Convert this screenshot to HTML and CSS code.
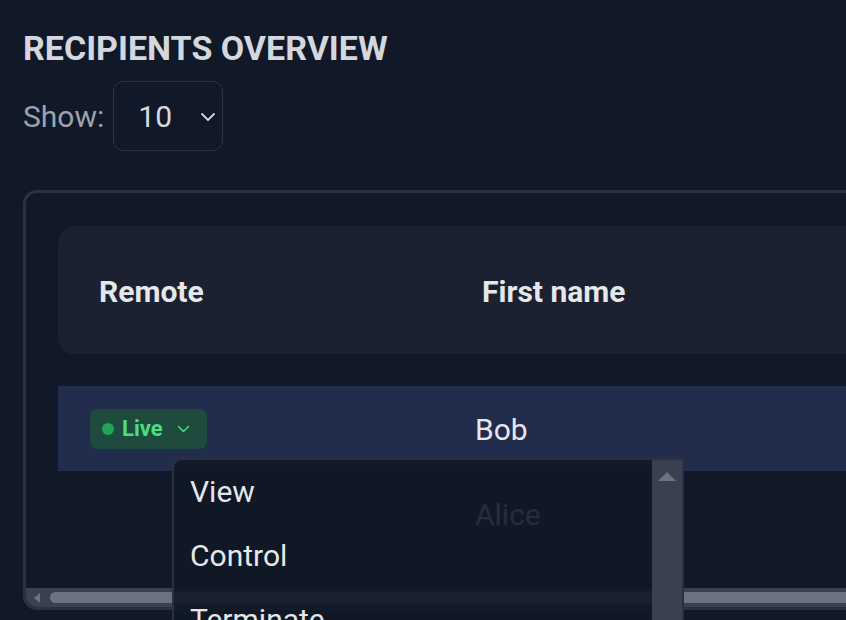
FILE: index.html
```html
<!DOCTYPE html>
<html lang="en">
<head>
<meta charset="utf-8">
<title>Recipients overview</title>
<link rel="stylesheet" href="styles.css">
</head>
<body>
<main class="page">
  <h1 class="title">RECIPIENTS OVERVIEW</h1>
  <div class="show-row">
    <span class="show-label">Show:</span>
    <div class="select">
      <span class="select-value">10</span>
      <svg class="select-chevron" width="16" height="10" viewBox="0 0 16 10"><path d="M2 2 L8 8 L14 2" fill="none" stroke="currentColor" stroke-width="1.8" stroke-linecap="round" stroke-linejoin="round"/></svg>
    </div>
  </div>

  <div class="table-card">
    <div class="table-scroll">
      <div class="thead">
        <div class="th th-first">Remote</div>
        <div class="th">First name</div>
        <div class="th"></div>
      </div>
      <div class="row row-selected">
        <div class="td">
          <span class="badge">
            <span class="badge-dot"></span>
            <span class="badge-text">Live</span>
            <svg class="badge-chevron" width="13" height="8" viewBox="0 0 13 8"><path d="M1.5 1.5 L6.5 6.5 L11.5 1.5" fill="none" stroke="currentColor" stroke-width="1.5" stroke-linecap="round" stroke-linejoin="round"/></svg>
          </span>
        </div>
        <div class="td">Bob</div>
        <div class="td"></div>
      </div>
      <div class="row">
        <div class="td"></div>
        <div class="td">Alice</div>
        <div class="td"></div>
      </div>
    </div>
    <div class="hscroll">
      <span class="hscroll-arrow"></span>
      <span class="hscroll-thumb"></span>
    </div>
  </div>

  <div class="menu">
    <ul class="menu-list">
      <li class="menu-item">View</li>
      <li class="menu-item">Control</li>
      <li class="menu-item">Terminate</li>
    </ul>
    <div class="menu-scrollbar"><span class="menu-scroll-up"></span></div>
  </div>
</main>
</body>
</html>
```

FILE: styles.css
```css
html, body {
  margin: 0;
  padding: 0;
  overflow: hidden;
  background: #111827;
}

body {
  font-family: Roboto, "Liberation Sans", sans-serif;
  color: #e5e7eb;
}

.page {
  position: relative;
  padding: 28px 0 0 23px;
  width: 1300px;
  height: 620px;
  box-sizing: border-box;
}

.title {
  margin: 0;
  font-size: 34px;
  line-height: 40px;
  font-weight: 700;
  color: #d4d7dd;
}

.show-row {
  margin-top: 13px;
  display: flex;
  align-items: baseline;
  gap: 8px;
}

.show-label {
  font-size: 30px;
  line-height: 36px;
  color: #9ca3af;
}

.select {
  display: flex;
  align-items: center;
  width: 110px;
  height: 70px;
  box-sizing: border-box;
  border: 1.5px solid #2b3141;
  border-radius: 10px;
  padding: 16px 6px 15px 24px;
  margin-left: 1px;
}

.select-value {
  font-size: 30px;
  line-height: 36px;
  color: #d8dbe0;
}

.select-chevron {
  margin-left: auto;
  color: #d1d5db;
}

.table-card {
  margin-top: 39px;
  width: 1200px;
  border: 3px solid #2b3141;
  border-radius: 14px;
  overflow: hidden;
  background: #111827;
}

.table-scroll {
  padding: 33px 0 32px 32px;
  display: flex;
  flex-direction: column;
}

.thead {
  display: grid;
  grid-template-columns: 385px 385px 385px;
  height: 128px;
  align-items: center;
  background: #1b2130;
  border-radius: 16px;
  margin-bottom: 32px;
}

.th {
  padding: 3px 0 0 39px;
  font-size: 30px;
  line-height: 36px;
  font-weight: 700;
  color: #e5e7eb;
}

.th-first {
  padding-left: 41px;
}

.row {
  display: grid;
  grid-template-columns: 385px 385px 385px;
  height: 85px;
  align-items: center;
}

.row-selected {
  background: #222c4c;
}

.td {
  padding: 2px 0 0 32px;
  font-size: 30px;
  line-height: 36px;
  color: #e5e7eb;
}

.badge {
  display: inline-flex;
  align-items: center;
  height: 40px;
  width: 117px;
  box-sizing: border-box;
  padding: 0 0 0 12px;
  margin-top: -2px;
  background: #1e4b3e;
  border-radius: 8px;
  vertical-align: middle;
}

.badge-dot {
  width: 12px;
  height: 12px;
  border-radius: 50%;
  background: #22a35a;
}

.badge-text {
  margin-left: 8px;
  font-size: 22px;
  line-height: 26px;
  font-weight: 700;
  color: #4ade80;
}

.badge-chevron {
  margin-left: 14px;
  color: #4ade80;
}

.hscroll {
  display: flex;
  align-items: center;
  height: 19px;
  background: #394150;
  padding-left: 8px;
}

.hscroll-arrow {
  width: 0;
  height: 0;
  border-right: 6px solid #6b7280;
  border-top: 5.5px solid transparent;
  border-bottom: 5.5px solid transparent;
}

.hscroll-thumb {
  margin-left: 10px;
  width: 1100px;
  height: 11px;
  border-radius: 6px;
  background: #6b7280;
}

.menu {
  position: absolute;
  left: 172px;
  top: 458px;
  width: 512px;
  height: 260px;
  box-sizing: border-box;
  border: 2px solid #2a3040;
  border-radius: 10px 0 0 0;
  background: rgba(17, 24, 39, 0.9);
  display: flex;
  overflow: hidden;
}

.menu-list {
  list-style: none;
  margin: 0;
  padding: 0;
  flex: 1;
}

.menu-item {
  height: 64px;
  display: flex;
  align-items: center;
  padding-left: 16px;
  font-size: 30px;
  line-height: 36px;
  color: #e5e7eb;
}

.menu-scrollbar {
  width: 30px;
  background: #394150;
  display: flex;
  justify-content: center;
  padding-top: 12px;
  box-sizing: border-box;
}

.menu-scroll-up {
  width: 0;
  height: 0;
  border-bottom: 9px solid #6b7280;
  border-left: 9px solid transparent;
  border-right: 9px solid transparent;
}
```
